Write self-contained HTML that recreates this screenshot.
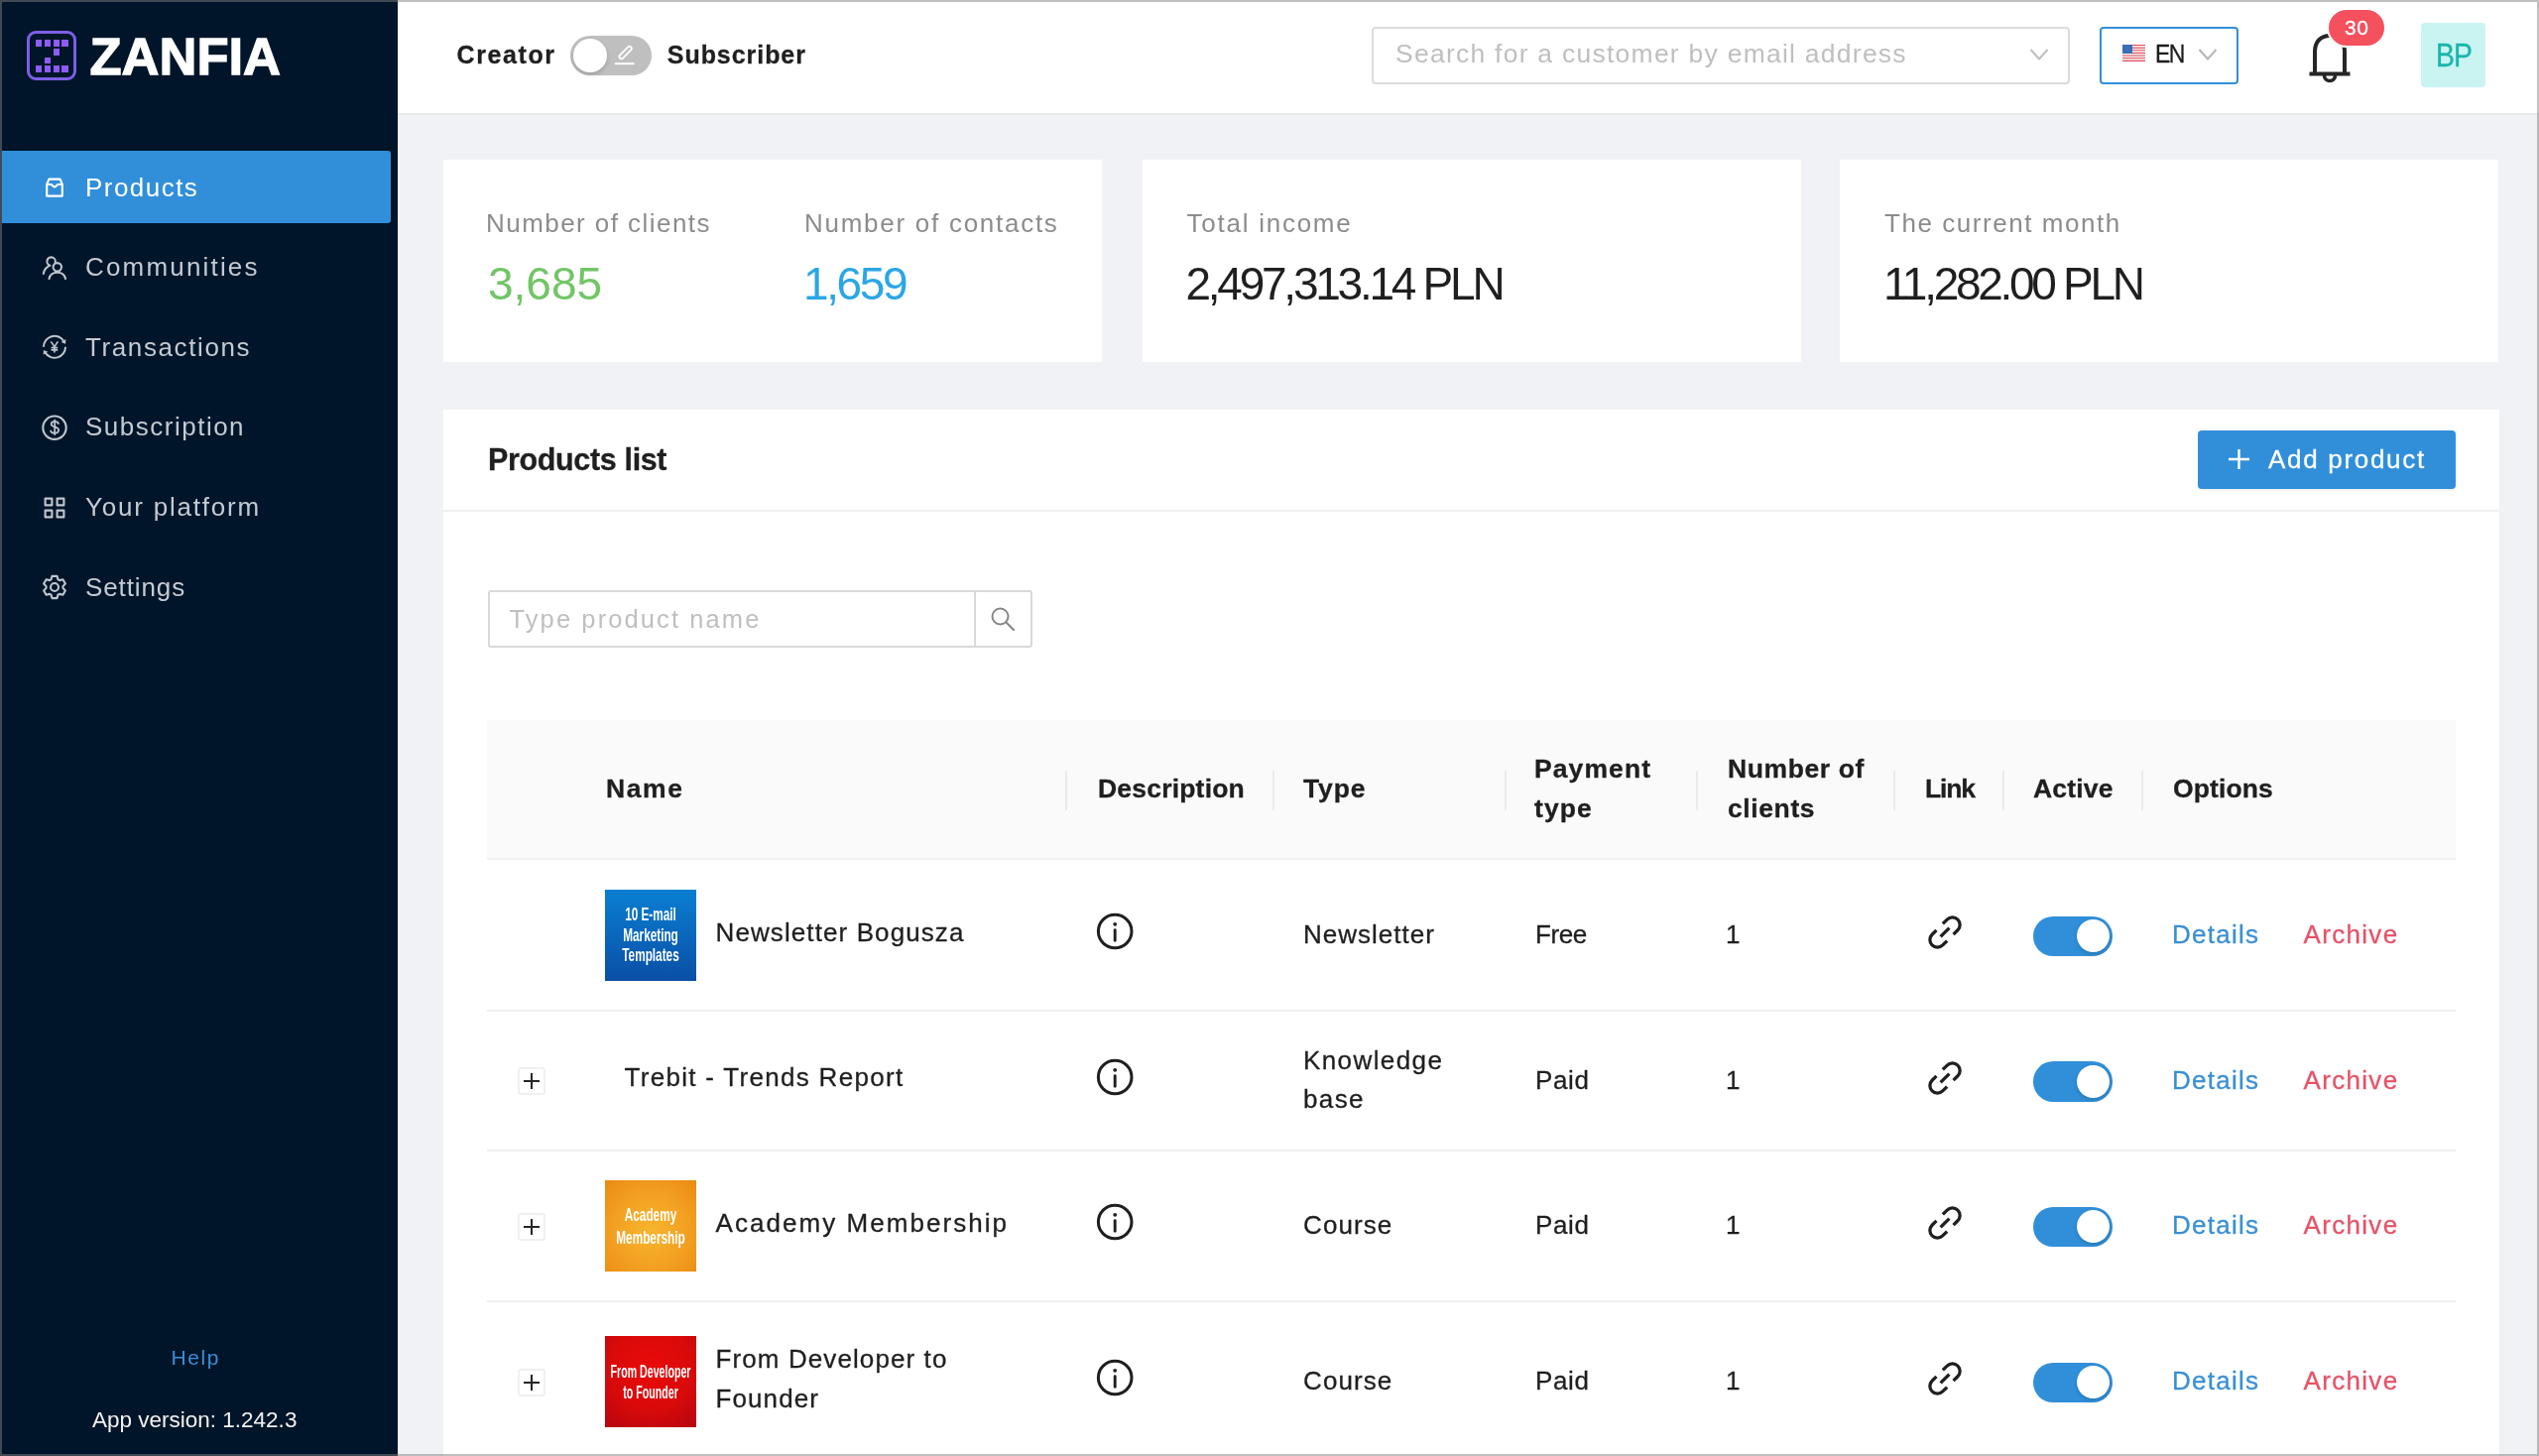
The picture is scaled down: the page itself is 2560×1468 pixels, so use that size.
<!DOCTYPE html>
<html><head><meta charset="utf-8"><title>Zanfia</title><style>
*{box-sizing:border-box;margin:0;padding:0}
html,body{width:2560px;height:1468px;overflow:hidden;background:#f0f2f5;font-family:"Liberation Sans", sans-serif}
#root{position:absolute;left:0;top:0;width:2560px;height:1468px;will-change:transform}
.t{position:absolute;line-height:1;white-space:nowrap;-webkit-text-stroke:0.3px currentColor}
.a{position:absolute}
</style></head><body><div id="root">
<div class="a" style="left:0;top:0;width:401px;height:1468px;background:#001529"></div>
<div class="a" style="left:27px;top:31px;width:50px;height:50px;border:3px solid #7c5fe6;border-radius:9px"></div>
<div class="a" style="left:36px;top:40.4px;width:6.4px;height:6.4px;background:#8b5cf6"></div>
<div class="a" style="left:44.8px;top:40.4px;width:6.4px;height:6.4px;background:#8b5cf6"></div>
<div class="a" style="left:53.6px;top:40.4px;width:6.4px;height:6.4px;background:#8b5cf6"></div>
<div class="a" style="left:62.4px;top:40.4px;width:6.4px;height:6.4px;background:#8b5cf6"></div>
<div class="a" style="left:53.6px;top:49.2px;width:6.4px;height:6.4px;background:#8b5cf6"></div>
<div class="a" style="left:44.8px;top:58px;width:6.4px;height:6.4px;background:#8b5cf6"></div>
<div class="a" style="left:36px;top:66.4px;width:6.4px;height:6.4px;background:#8b5cf6"></div>
<div class="a" style="left:44.8px;top:66.4px;width:6.4px;height:6.4px;background:#8b5cf6"></div>
<div class="a" style="left:53.6px;top:66.4px;width:6.4px;height:6.4px;background:#8b5cf6"></div>
<div class="a" style="left:62.4px;top:66.4px;width:6.4px;height:6.4px;background:#8b5cf6"></div>
<div class="t" style="left:90.5px;top:30.9px;font-size:52.5px;color:#ffffff;font-weight:700;letter-spacing:0.0px;-webkit-text-stroke:1.3px #fff;">ZANFIA</div>
<div class="a" style="left:2px;top:152px;width:392px;height:73px;background:#318fda;border-radius:0 3px 3px 0"></div>
<div class="t" style="left:86.0px;top:175.5px;font-size:26px;color:#ffffff;font-weight:400;letter-spacing:1.46px;-webkit-text-stroke:0;">Products</div>
<div class="t" style="left:86.0px;top:256.1px;font-size:26px;color:#c4cad3;font-weight:400;letter-spacing:2.18px;-webkit-text-stroke:0;">Communities</div>
<div class="t" style="left:86.0px;top:336.7px;font-size:26px;color:#c4cad3;font-weight:400;letter-spacing:1.61px;-webkit-text-stroke:0;">Transactions</div>
<div class="t" style="left:86.0px;top:417.3px;font-size:26px;color:#c4cad3;font-weight:400;letter-spacing:1.5px;-webkit-text-stroke:0;">Subscription</div>
<div class="t" style="left:86.0px;top:497.9px;font-size:26px;color:#c4cad3;font-weight:400;letter-spacing:1.78px;-webkit-text-stroke:0;">Your platform</div>
<div class="t" style="left:86.0px;top:578.5px;font-size:26px;color:#c4cad3;font-weight:400;letter-spacing:0.89px;-webkit-text-stroke:0;">Settings</div>
<svg class="a" style="left:41.0px;top:174.5px" width="28" height="28" viewBox="0 0 28 28"><path d="M6.2 11 L8.4 5.6 H19.6 L21.8 11 V22.6 H6.2 Z M6.2 11 H10.6 C11.6 11 12 13.4 14 13.4 C16 13.4 16.4 11 17.4 11 H21.8" stroke="#ffffff" stroke-width="2.1" fill="none" stroke-linejoin="round"/></svg>
<svg class="a" style="left:41.0px;top:255.60000000000002px" width="28" height="28" viewBox="0 0 28 28"><path d="M14.66 8.69 A4.2 4.2 0 1 0 9.51 11.66" stroke="#bec6d0" stroke-width="2.1" fill="none" stroke-linecap="round" stroke-linejoin="round"/><path d="M2.8 19.9 C3.5 16.5 5.3 13.8 7.9 12.4" stroke="#bec6d0" stroke-width="2.1" fill="none" stroke-linecap="round" stroke-linejoin="round"/><circle cx="16.8" cy="13.3" r="4.2" stroke="#bec6d0" stroke-width="2.1" fill="none" stroke-linecap="round" stroke-linejoin="round"/><path d="M8.5 24.9 C9.5 20.5 12.5 18.7 16.8 18.7 C21 18.7 24 20.5 25 24.9" stroke="#bec6d0" stroke-width="2.1" fill="none" stroke-linecap="round" stroke-linejoin="round"/></svg>
<svg class="a" style="left:41.0px;top:336.0px" width="28" height="28" viewBox="0 0 28 28"><path d="M3.00 13.80 A11 11 0 0 1 23.33 7.97" stroke="#bec6d0" stroke-width="2" fill="none"/><path d="M25.02 10.68 L25.39 5.98 L20.64 8.95 Z" fill="#bec6d0"/><path d="M25.00 13.80 A11 11 0 0 1 4.67 19.63" stroke="#bec6d0" stroke-width="2" fill="none"/><path d="M2.98 16.92 L2.61 21.62 L7.36 18.65 Z" fill="#bec6d0"/><path d="M10.4 8.4 L13.9 13.6 L17.4 8.4 M13.9 13.6 V19.4 M10.6 14.7 H17.2 M10.6 16.9 H17.2" stroke="#bec6d0" stroke-width="1.7" fill="none"/></svg>
<svg class="a" style="left:41.0px;top:416.6px" width="28" height="28" viewBox="0 0 28 28"><circle cx="14" cy="14.2" r="11.7" stroke="#bec6d0" stroke-width="2.1" fill="none"/><path d="M17.9 10.1 C17.4 8.7 16.2 7.9 14.2 7.9 C12.1 7.9 10.7 9 10.7 10.7 C10.7 14.1 18.1 12.7 18.1 16.6 C18.1 18.6 16.5 19.8 14.2 19.8 C12.1 19.8 10.6 18.9 10.1 17.5 M14.2 6.7 V21" stroke="#bec6d0" stroke-width="1.8" fill="none" stroke-linecap="round"/></svg>
<svg class="a" style="left:41.0px;top:497.5px" width="28" height="28" viewBox="0 0 28 28"><rect x="4.6" y="4.6" width="6.8" height="6.8" stroke="#bec6d0" stroke-width="2.1" fill="none" stroke-linecap="round" stroke-linejoin="round"/><rect x="16.6" y="4.6" width="6.8" height="6.8" stroke="#bec6d0" stroke-width="2.1" fill="none" stroke-linecap="round" stroke-linejoin="round"/><rect x="4.6" y="16.6" width="6.8" height="6.8" stroke="#bec6d0" stroke-width="2.1" fill="none" stroke-linecap="round" stroke-linejoin="round"/><rect x="16.6" y="16.6" width="6.8" height="6.8" stroke="#bec6d0" stroke-width="2.1" fill="none" stroke-linecap="round" stroke-linejoin="round"/></svg>
<svg class="a" style="left:41.0px;top:578.0px" width="28" height="28" viewBox="0 0 28 28"><path d="M17.47 21.76 L16.49 25.13 L11.51 25.13 L10.53 21.76 L9.01 20.88 L5.61 21.72 L3.12 17.41 L5.55 14.88 L5.55 13.12 L3.12 10.59 L5.61 6.28 L9.01 7.12 L10.53 6.24 L11.51 2.87 L16.49 2.87 L17.47 6.24 L18.99 7.12 L22.39 6.28 L24.88 10.59 L22.45 13.12 L22.45 14.88 L24.88 17.41 L22.39 21.72 L18.99 20.88 Z" stroke="#bec6d0" stroke-width="2.1" fill="none" stroke-linecap="round" stroke-linejoin="round"/><circle cx="14" cy="14" r="4" stroke="#bec6d0" stroke-width="2.1" fill="none" stroke-linecap="round" stroke-linejoin="round"/></svg>
<div class="t" style="left:172.5px;top:1358.1px;font-size:21px;color:#3a8fd8;font-weight:400;letter-spacing:1.6px;-webkit-text-stroke:0;">Help</div>
<div class="t" style="left:93.0px;top:1421.0px;font-size:22.5px;color:#f2f2f2;font-weight:400;letter-spacing:0.0px;-webkit-text-stroke:0;">App version: 1.242.3</div>
<div class="a" style="left:401px;top:0;width:2159px;height:116px;background:#fff;border-bottom:2px solid #e8e9eb"></div>
<div class="t" style="left:460.5px;top:42.5px;font-size:25px;color:#1f1f1f;font-weight:700;letter-spacing:1.6px;">Creator</div>
<div class="a" style="left:575px;top:36px;width:82px;height:40px;border-radius:20px;background:#bfbfbf"></div>
<div class="a" style="left:578px;top:39px;width:33.5px;height:33.5px;border-radius:50%;background:#fff;box-shadow:0 2px 4px rgba(0,35,11,.2)"></div>
<svg class="a" style="left:617px;top:42px" width="26" height="26" viewBox="0 0 26 26"><rect x="5.7" y="8.9" width="15.8" height="4.2" rx="2.1" transform="rotate(-45 13.6 11)" stroke="#fff" stroke-width="1.8" fill="none"/><path d="M2.8 22.2 H22.6" stroke="#fff" stroke-width="2"/></svg>
<div class="t" style="left:672.8px;top:42.5px;font-size:25px;color:#1f1f1f;font-weight:700;letter-spacing:0.95px;">Subscriber</div>
<div class="a" style="left:1383px;top:27px;width:704px;height:58px;border:2px solid #dcdcdc;border-radius:4px;background:#fff"></div>
<div class="t" style="left:1407.0px;top:41.3px;font-size:26.5px;color:#bfbfbf;font-weight:400;letter-spacing:1.25px;-webkit-text-stroke:0;">Search for a customer by email address</div>
<svg class="a" style="left:2046px;top:48px" width="20" height="14" viewBox="0 0 20 14"><path d="M1.5 2 L10 11.5 L18.5 2" stroke="#bfbfbf" stroke-width="2" fill="none"/></svg>
<div class="a" style="left:2117px;top:27px;width:140px;height:58px;border:2px solid #318fda;border-radius:4px;background:#fff"></div>
<svg class="a" style="left:2140px;top:45px" width="23" height="17" viewBox="0 0 23 17"><rect x="0" y="0.00" width="23" height="1.31" fill="#e0525e"/><rect x="0" y="1.31" width="23" height="1.31" fill="#f4f4f4"/><rect x="0" y="2.62" width="23" height="1.31" fill="#e0525e"/><rect x="0" y="3.92" width="23" height="1.31" fill="#f4f4f4"/><rect x="0" y="5.23" width="23" height="1.31" fill="#e0525e"/><rect x="0" y="6.54" width="23" height="1.31" fill="#f4f4f4"/><rect x="0" y="7.85" width="23" height="1.31" fill="#e0525e"/><rect x="0" y="9.15" width="23" height="1.31" fill="#f4f4f4"/><rect x="0" y="10.46" width="23" height="1.31" fill="#e0525e"/><rect x="0" y="11.77" width="23" height="1.31" fill="#f4f4f4"/><rect x="0" y="13.08" width="23" height="1.31" fill="#e0525e"/><rect x="0" y="14.38" width="23" height="1.31" fill="#f4f4f4"/><rect x="0" y="15.69" width="23" height="1.31" fill="#e0525e"/><rect x="0" y="17.00" width="23" height="1.31" fill="#f4f4f4"/><rect x="0" y="0" width="10" height="9" fill="#3a6fb8"/></svg>
<div class="t" style="left:2173.0px;top:42.3px;font-size:25.5px;color:#1f1f1f;font-weight:400;letter-spacing:-1.8px;transform:scaleX(0.9);transform-origin:0 0;">EN</div>
<svg class="a" style="left:2216px;top:48px" width="20" height="14" viewBox="0 0 20 14"><path d="M1.5 2 L10 11.5 L18.5 2" stroke="#b5b5b5" stroke-width="2" fill="none"/></svg>
<svg class="a" style="left:2322px;top:26px" width="54" height="60" viewBox="0 0 54 60"><path d="M12 48.5 V26 C12 16 18 10 27 10 C36 10 42 16 42 26 V48.5" stroke="#262626" stroke-width="4" fill="none"/><path d="M6.5 48.5 H47.5" stroke="#262626" stroke-width="4.2"/><path d="M21.5 50 A5.5 5.5 0 0 0 32.5 50" stroke="#262626" stroke-width="3.6" fill="none"/></svg>
<div class="a" style="left:2346px;top:8px;width:60px;height:40px;border-radius:20px;background:#f4505e;border:2.5px solid #fff"></div>
<div class="t" style="left:2364.0px;top:17.4px;font-size:21px;color:#ffffff;font-weight:400;letter-spacing:0.5px;">30</div>
<div class="a" style="left:2441px;top:23px;width:65px;height:65px;border-radius:4px;background:#c9f4f2"></div>
<div class="t" style="left:2456.0px;top:38.7px;font-size:33px;color:#19b5ad;font-weight:400;letter-spacing:-1px;transform:scaleX(0.86);transform-origin:0 0;">BP</div>
<div class="a" style="left:447px;top:161px;width:664px;height:204px;background:#fff"></div>
<div class="a" style="left:1152px;top:161px;width:664px;height:204px;background:#fff"></div>
<div class="a" style="left:1855px;top:161px;width:664px;height:204px;background:#fff"></div>
<div class="t" style="left:490.0px;top:211.6px;font-size:26px;color:#8c8c8c;font-weight:400;letter-spacing:1.45px;-webkit-text-stroke:0;">Number of clients</div>
<div class="t" style="left:492.0px;top:262.6px;font-size:46px;color:#72c567;font-weight:400;letter-spacing:0px;-webkit-text-stroke:0;">3,685</div>
<div class="t" style="left:811.0px;top:211.6px;font-size:26px;color:#8c8c8c;font-weight:400;letter-spacing:1.73px;-webkit-text-stroke:0;">Number of contacts</div>
<div class="t" style="left:810.0px;top:262.6px;font-size:46px;color:#2ba6e5;font-weight:400;letter-spacing:-2.4px;-webkit-text-stroke:0;">1,659</div>
<div class="t" style="left:1196.5px;top:211.6px;font-size:26px;color:#8c8c8c;font-weight:400;letter-spacing:1.75px;-webkit-text-stroke:0;">Total income</div>
<div class="t" style="left:1195.5px;top:262.6px;font-size:46px;color:#1f1f1f;font-weight:400;letter-spacing:-3.25px;-webkit-text-stroke:0;">2,497,313.14 PLN</div>
<div class="t" style="left:1900.0px;top:211.6px;font-size:26px;color:#8c8c8c;font-weight:400;letter-spacing:1.55px;-webkit-text-stroke:0;">The current month</div>
<div class="t" style="left:1899.0px;top:262.6px;font-size:46px;color:#1f1f1f;font-weight:400;letter-spacing:-3.3px;-webkit-text-stroke:0;">11,282.00 PLN</div>
<div class="a" style="left:447px;top:413px;width:2073px;height:1100px;background:#fff"></div>
<div class="a" style="left:447px;top:513.5px;width:2073px;height:2px;background:#f0f0f0"></div>
<div class="t" style="left:492.0px;top:448.1px;font-size:30.5px;color:#1f1f1f;font-weight:700;letter-spacing:-0.35px;">Products list</div>
<div class="a" style="left:2216px;top:434px;width:260px;height:59px;border-radius:4px;background:#318fda;box-shadow:0 2px 0 rgba(0,0,0,.045)"></div>
<svg class="a" style="left:2246px;top:452px" width="23" height="22" viewBox="0 0 23 22"><path d="M11.5 1 V21 M1 11 H22" stroke="#fff" stroke-width="2.4"/></svg>
<div class="t" style="left:2287.0px;top:449.6px;font-size:26px;color:#ffffff;font-weight:400;letter-spacing:1.7px;">Add product</div>
<div class="a" style="left:491.5px;top:594.8px;width:549px;height:58px;border:2px solid #d9d9d9;border-radius:3px;background:#fff"></div>
<div class="a" style="left:982px;top:597px;width:2px;height:54px;background:#d9d9d9"></div>
<div class="t" style="left:513.5px;top:612.4px;font-size:25.5px;color:#bfbfbf;font-weight:400;letter-spacing:2.1px;-webkit-text-stroke:0;">Type product name</div>
<svg class="a" style="left:998px;top:611px" width="26" height="26" viewBox="0 0 26 26"><circle cx="10.5" cy="10.5" r="8" stroke="#858585" stroke-width="1.9" fill="none"/><path d="M16.5 16.5 L24 24" stroke="#858585" stroke-width="2" stroke-linecap="round"/></svg>
<div class="a" style="left:491px;top:726px;width:1985px;height:141px;background:#fafafa;border-bottom:2px solid #f0f0f0"></div>
<div class="a" style="left:1074px;top:777px;width:2px;height:40px;background:#ebebeb"></div>
<div class="a" style="left:1283px;top:777px;width:2px;height:40px;background:#ebebeb"></div>
<div class="a" style="left:1517px;top:777px;width:2px;height:40px;background:#ebebeb"></div>
<div class="a" style="left:1710px;top:777px;width:2px;height:40px;background:#ebebeb"></div>
<div class="a" style="left:1909px;top:777px;width:2px;height:40px;background:#ebebeb"></div>
<div class="a" style="left:2019px;top:777px;width:2px;height:40px;background:#ebebeb"></div>
<div class="a" style="left:2159px;top:777px;width:2px;height:40px;background:#ebebeb"></div>
<div class="t" style="left:611.0px;top:782.1px;font-size:26.5px;color:#1f1f1f;font-weight:700;letter-spacing:1.6px;">Name</div>
<div class="t" style="left:1107.0px;top:782.1px;font-size:26.5px;color:#1f1f1f;font-weight:700;letter-spacing:0.2px;">Description</div>
<div class="t" style="left:1314.0px;top:782.1px;font-size:26.5px;color:#1f1f1f;font-weight:700;letter-spacing:0.9px;">Type</div>
<div class="t" style="left:1547.0px;top:762.1px;font-size:26.5px;color:#1f1f1f;font-weight:700;letter-spacing:1.1px;">Payment</div>
<div class="t" style="left:1547.0px;top:802.1px;font-size:26.5px;color:#1f1f1f;font-weight:700;letter-spacing:1.1px;">type</div>
<div class="t" style="left:1742.0px;top:762.1px;font-size:26.5px;color:#1f1f1f;font-weight:700;letter-spacing:0.6px;">Number of</div>
<div class="t" style="left:1742.0px;top:802.1px;font-size:26.5px;color:#1f1f1f;font-weight:700;letter-spacing:0.6px;">clients</div>
<div class="t" style="left:1941.0px;top:782.1px;font-size:26.5px;color:#1f1f1f;font-weight:700;letter-spacing:-1.2px;">Link</div>
<div class="t" style="left:2050.0px;top:782.1px;font-size:26.5px;color:#1f1f1f;font-weight:700;letter-spacing:0.2px;">Active</div>
<div class="t" style="left:2191.0px;top:782.1px;font-size:26.5px;color:#1f1f1f;font-weight:700;letter-spacing:0.1px;">Options</div>
<div class="a" style="left:491px;top:1018px;width:1985px;height:2px;background:#f0f0f0"></div>
<div class="a" style="left:491px;top:1159px;width:1985px;height:2px;background:#f0f0f0"></div>
<div class="a" style="left:491px;top:1311px;width:1985px;height:2px;background:#f0f0f0"></div>
<div class="a" style="left:610px;top:897px;width:92px;height:92px;background:linear-gradient(#0a7fd2,#0a4fa6);overflow:hidden"><div style="position:absolute;left:-54px;width:200px;text-align:center;top:14.799999999999997px;height:20.8px;line-height:20.8px;font-size:19px;font-weight:700;color:#fff;transform:scaleX(0.62);letter-spacing:0px;white-space:nowrap">10 E-mail</div><div style="position:absolute;left:-54px;width:200px;text-align:center;top:35.599999999999994px;height:20.8px;line-height:20.8px;font-size:19px;font-weight:700;color:#fff;transform:scaleX(0.62);letter-spacing:0px;white-space:nowrap">Marketing</div><div style="position:absolute;left:-54px;width:200px;text-align:center;top:56.4px;height:20.8px;line-height:20.8px;font-size:19px;font-weight:700;color:#fff;transform:scaleX(0.62);letter-spacing:0px;white-space:nowrap">Templates</div></div>
<div class="t" style="left:721.5px;top:926.6px;font-size:26px;color:#1f1f1f;font-weight:400;letter-spacing:1.1px;">Newsletter Bogusza</div>
<svg class="a" style="left:1104px;top:919px" width="40" height="40" viewBox="0 0 40 40"><circle cx="20.2" cy="20" r="16.8" stroke="#1f1f1f" stroke-width="3" fill="none"/><circle cx="20.2" cy="12.8" r="1.9" fill="#1f1f1f"/><path d="M20.2 18.6 V29.2" stroke="#1f1f1f" stroke-width="2.9" stroke-linecap="round"/></svg>
<div class="t" style="left:1314.0px;top:928.8px;font-size:26px;color:#1f1f1f;font-weight:400;letter-spacing:1.0px;">Newsletter</div>
<div class="t" style="left:1548.0px;top:928.8px;font-size:26px;color:#1f1f1f;font-weight:400;letter-spacing:-0.4px;">Free</div>
<div class="t" style="left:1740.0px;top:928.8px;font-size:26px;color:#1f1f1f;font-weight:400;letter-spacing:0px;">1</div>
<svg class="a" style="left:1938.7px;top:918px" width="44" height="44" viewBox="2.5 2.5 39 39"><g transform="rotate(-45 22 22)" stroke="#1f1f1f" stroke-width="2.9" fill="none" stroke-linecap="butt"><path d="M18 15.3 H12.5 A6.7 6.7 0 0 0 12.5 28.7 H18"/><path d="M26 15.3 H31.5 A6.7 6.7 0 0 1 31.5 28.7 H26"/><path d="M16.5 22 H27.5"/></g></svg>
<div class="a" style="left:2049.8px;top:923.5px;width:80px;height:40.4px;border-radius:20.2px;background:#318fda"></div>
<div class="a" style="left:2093.5px;top:927.0px;width:33.2px;height:33.2px;border-radius:50%;background:#fff;box-shadow:0 2px 4px rgba(0,35,11,.2)"></div>
<div class="t" style="left:2190.0px;top:928.8px;font-size:26px;color:#3a8fd6;font-weight:400;letter-spacing:1.25px;">Details</div>
<div class="t" style="left:2322.6px;top:928.8px;font-size:26px;color:#e65368;font-weight:400;letter-spacing:1.3px;">Archive</div>
<div class="a" style="left:522px;top:1076px;width:28px;height:28px;border:2px solid #f0f0f0;border-radius:3px;background:#fff"></div>
<svg class="a" style="left:526px;top:1080px" width="20" height="20" viewBox="0 0 20 20"><path d="M10 2 V18 M2 10 H18" stroke="#262626" stroke-width="2"/></svg>
<div class="t" style="left:629.5px;top:1073.3px;font-size:26px;color:#1f1f1f;font-weight:400;letter-spacing:1.3px;">Trebit - Trends Report</div>
<svg class="a" style="left:1104px;top:1065.6px" width="40" height="40" viewBox="0 0 40 40"><circle cx="20.2" cy="20" r="16.8" stroke="#1f1f1f" stroke-width="3" fill="none"/><circle cx="20.2" cy="12.8" r="1.9" fill="#1f1f1f"/><path d="M20.2 18.6 V29.2" stroke="#1f1f1f" stroke-width="2.9" stroke-linecap="round"/></svg>
<div class="t" style="left:1314.0px;top:1055.8px;font-size:26px;color:#1f1f1f;font-weight:400;letter-spacing:1.4px;">Knowledge</div>
<div class="t" style="left:1314.0px;top:1094.8px;font-size:26px;color:#1f1f1f;font-weight:400;letter-spacing:1.4px;">base</div>
<div class="t" style="left:1548.0px;top:1075.8px;font-size:26px;color:#1f1f1f;font-weight:400;letter-spacing:0.6px;">Paid</div>
<div class="t" style="left:1740.0px;top:1075.8px;font-size:26px;color:#1f1f1f;font-weight:400;letter-spacing:0px;">1</div>
<svg class="a" style="left:1938.7px;top:1065px" width="44" height="44" viewBox="2.5 2.5 39 39"><g transform="rotate(-45 22 22)" stroke="#1f1f1f" stroke-width="2.9" fill="none" stroke-linecap="butt"><path d="M18 15.3 H12.5 A6.7 6.7 0 0 0 12.5 28.7 H18"/><path d="M26 15.3 H31.5 A6.7 6.7 0 0 1 31.5 28.7 H26"/><path d="M16.5 22 H27.5"/></g></svg>
<div class="a" style="left:2049.8px;top:1070.2px;width:80px;height:40.4px;border-radius:20.2px;background:#318fda"></div>
<div class="a" style="left:2093.5px;top:1073.7px;width:33.2px;height:33.2px;border-radius:50%;background:#fff;box-shadow:0 2px 4px rgba(0,35,11,.2)"></div>
<div class="t" style="left:2190.0px;top:1075.8px;font-size:26px;color:#3a8fd6;font-weight:400;letter-spacing:1.25px;">Details</div>
<div class="t" style="left:2322.6px;top:1075.8px;font-size:26px;color:#e65368;font-weight:400;letter-spacing:1.3px;">Archive</div>
<div class="a" style="left:522px;top:1222.7px;width:28px;height:28px;border:2px solid #f0f0f0;border-radius:3px;background:#fff"></div>
<svg class="a" style="left:526px;top:1226.7px" width="20" height="20" viewBox="0 0 20 20"><path d="M10 2 V18 M2 10 H18" stroke="#262626" stroke-width="2"/></svg>
<div class="a" style="left:610px;top:1190px;width:92px;height:92px;background:radial-gradient(circle at 50% 55%,#f7b52c 0%,#f3a022 55%,#ea8a12 100%);overflow:hidden"><div style="position:absolute;left:-54px;width:200px;text-align:center;top:23.0px;height:23px;line-height:23px;font-size:19px;font-weight:700;color:#fff;transform:scaleX(0.62);letter-spacing:0px;white-space:nowrap">Academy</div><div style="position:absolute;left:-54px;width:200px;text-align:center;top:46.0px;height:23px;line-height:23px;font-size:19px;font-weight:700;color:#fff;transform:scaleX(0.62);letter-spacing:0px;white-space:nowrap">Membership</div></div>
<div class="t" style="left:721.5px;top:1220.3px;font-size:26px;color:#1f1f1f;font-weight:400;letter-spacing:2.05px;">Academy Membership</div>
<svg class="a" style="left:1104px;top:1212.2px" width="40" height="40" viewBox="0 0 40 40"><circle cx="20.2" cy="20" r="16.8" stroke="#1f1f1f" stroke-width="3" fill="none"/><circle cx="20.2" cy="12.8" r="1.9" fill="#1f1f1f"/><path d="M20.2 18.6 V29.2" stroke="#1f1f1f" stroke-width="2.9" stroke-linecap="round"/></svg>
<div class="t" style="left:1314.0px;top:1222.3px;font-size:26px;color:#1f1f1f;font-weight:400;letter-spacing:1.1px;">Course</div>
<div class="t" style="left:1548.0px;top:1222.3px;font-size:26px;color:#1f1f1f;font-weight:400;letter-spacing:0.6px;">Paid</div>
<div class="t" style="left:1740.0px;top:1222.3px;font-size:26px;color:#1f1f1f;font-weight:400;letter-spacing:0px;">1</div>
<svg class="a" style="left:1938.7px;top:1211px" width="44" height="44" viewBox="2.5 2.5 39 39"><g transform="rotate(-45 22 22)" stroke="#1f1f1f" stroke-width="2.9" fill="none" stroke-linecap="butt"><path d="M18 15.3 H12.5 A6.7 6.7 0 0 0 12.5 28.7 H18"/><path d="M26 15.3 H31.5 A6.7 6.7 0 0 1 31.5 28.7 H26"/><path d="M16.5 22 H27.5"/></g></svg>
<div class="a" style="left:2049.8px;top:1216.8px;width:80px;height:40.4px;border-radius:20.2px;background:#318fda"></div>
<div class="a" style="left:2093.5px;top:1220.3px;width:33.2px;height:33.2px;border-radius:50%;background:#fff;box-shadow:0 2px 4px rgba(0,35,11,.2)"></div>
<div class="t" style="left:2190.0px;top:1222.3px;font-size:26px;color:#3a8fd6;font-weight:400;letter-spacing:1.25px;">Details</div>
<div class="t" style="left:2322.6px;top:1222.3px;font-size:26px;color:#e65368;font-weight:400;letter-spacing:1.3px;">Archive</div>
<div class="a" style="left:522px;top:1379.5px;width:28px;height:28px;border:2px solid #f0f0f0;border-radius:3px;background:#fff"></div>
<svg class="a" style="left:526px;top:1383.5px" width="20" height="20" viewBox="0 0 20 20"><path d="M10 2 V18 M2 10 H18" stroke="#262626" stroke-width="2"/></svg>
<div class="a" style="left:610px;top:1347px;width:92px;height:92px;background:radial-gradient(circle at 50% 35%,#ea0a0a 0%,#d90a0a 55%,#b50510 100%);overflow:hidden"><div style="position:absolute;left:-54px;width:200px;text-align:center;top:25.0px;height:21px;line-height:21px;font-size:19px;font-weight:700;color:#fff;transform:scaleX(0.56);letter-spacing:0px;white-space:nowrap">From Developer</div><div style="position:absolute;left:-54px;width:200px;text-align:center;top:46.0px;height:21px;line-height:21px;font-size:19px;font-weight:700;color:#fff;transform:scaleX(0.56);letter-spacing:0px;white-space:nowrap">to Founder</div></div>
<div class="t" style="left:721.5px;top:1356.6px;font-size:26px;color:#1f1f1f;font-weight:400;letter-spacing:1.1px;">From Developer to</div>
<div class="t" style="left:721.5px;top:1396.6px;font-size:26px;color:#1f1f1f;font-weight:400;letter-spacing:1.1px;">Founder</div>
<svg class="a" style="left:1104px;top:1369.3px" width="40" height="40" viewBox="0 0 40 40"><circle cx="20.2" cy="20" r="16.8" stroke="#1f1f1f" stroke-width="3" fill="none"/><circle cx="20.2" cy="12.8" r="1.9" fill="#1f1f1f"/><path d="M20.2 18.6 V29.2" stroke="#1f1f1f" stroke-width="2.9" stroke-linecap="round"/></svg>
<div class="t" style="left:1314.0px;top:1379.3px;font-size:26px;color:#1f1f1f;font-weight:400;letter-spacing:1.1px;">Course</div>
<div class="t" style="left:1548.0px;top:1379.3px;font-size:26px;color:#1f1f1f;font-weight:400;letter-spacing:0.6px;">Paid</div>
<div class="t" style="left:1740.0px;top:1379.3px;font-size:26px;color:#1f1f1f;font-weight:400;letter-spacing:0px;">1</div>
<svg class="a" style="left:1938.7px;top:1368px" width="44" height="44" viewBox="2.5 2.5 39 39"><g transform="rotate(-45 22 22)" stroke="#1f1f1f" stroke-width="2.9" fill="none" stroke-linecap="butt"><path d="M18 15.3 H12.5 A6.7 6.7 0 0 0 12.5 28.7 H18"/><path d="M26 15.3 H31.5 A6.7 6.7 0 0 1 31.5 28.7 H26"/><path d="M16.5 22 H27.5"/></g></svg>
<div class="a" style="left:2049.8px;top:1373.6px;width:80px;height:40.4px;border-radius:20.2px;background:#318fda"></div>
<div class="a" style="left:2093.5px;top:1377.1px;width:33.2px;height:33.2px;border-radius:50%;background:#fff;box-shadow:0 2px 4px rgba(0,35,11,.2)"></div>
<div class="t" style="left:2190.0px;top:1379.3px;font-size:26px;color:#3a8fd6;font-weight:400;letter-spacing:1.25px;">Details</div>
<div class="t" style="left:2322.6px;top:1379.3px;font-size:26px;color:#e65368;font-weight:400;letter-spacing:1.3px;">Archive</div>
<div class="a" style="left:0;top:0;width:2560px;height:1468px;border:2px solid rgba(128,128,128,.5);pointer-events:none"></div>
</div></body></html>
